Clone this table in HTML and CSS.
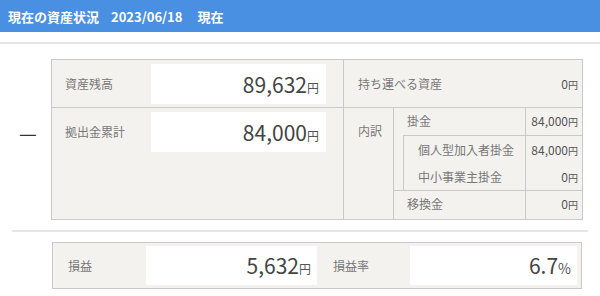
FILE: index.html
```html
<!DOCTYPE html>
<html lang="ja">
<head>
  <meta charset="UTF-8" />
  <meta name="viewport" content="width=device-width, initial-scale=1.0">
  <title>現在の資産状況</title>
  <link rel="stylesheet" href="styles.css">
</head>
<body>
  <header class="status-bar">
    <span class="status-title">現在の資産状況</span>
    <span class="status-date">2023/06/18</span>
    <span class="status-suffix">現在</span>
  </header>
  <div class="rule top-rule"></div>

  <section class="summary">
    <div class="minus">—</div>
    <div class="panel">
      <div class="panel-left">
        <div class="main-row first">
          <span class="label">資産残高</span>
          <div class="value-box"><span class="num">89,632</span><span class="unit">円</span></div>
        </div>
        <div class="main-row">
          <span class="label">拠出金累計</span>
          <div class="value-box"><span class="num">84,000</span><span class="unit">円</span></div>
        </div>
      </div>

      <div class="panel-right">
        <div class="portable">
          <span class="label">持ち運べる資産</span>
          <span class="small-val">0<span class="small-unit">円</span></span>
        </div>
        <div class="breakdown">
          <div class="breakdown-head">内訳</div>
          <div class="breakdown-body">
            <div class="b-row">
              <span class="b-name">掛金</span>
              <span class="b-val">84,000<span class="small-unit">円</span></span>
            </div>
            <div class="b-sub">
              <div class="b-row">
                <span class="b-name">個人型加入者掛金</span>
                <span class="b-val">84,000<span class="small-unit">円</span></span>
              </div>
              <div class="b-row">
                <span class="b-name">中小事業主掛金</span>
                <span class="b-val">0<span class="small-unit">円</span></span>
              </div>
            </div>
            <div class="b-row last">
              <span class="b-name">移換金</span>
              <span class="b-val">0<span class="small-unit">円</span></span>
            </div>
          </div>
        </div>
      </div>
    </div>
  </section>

  <div class="rule mid-rule"></div>

  <section class="profit">
    <div class="profit-panel">
      <span class="label profit-label">損益</span>
      <div class="value-box profit-box"><span class="num">5,632</span><span class="unit">円</span></div>
      <span class="label rate-label">損益率</span>
      <div class="value-box rate-box"><span class="num">6.7</span><span class="unit pct">%</span></div>
    </div>
  </section>
</body>
</html>
```

FILE: styles.css
```css
body {
  margin: 0;
  font-family: "Noto Sans CJK JP", "Noto Sans", sans-serif;
  color: #444;
  background: #fff;
}
.status-bar {
  height: 32px;
  background: #4a90e2;
  color: #fff;
  font-size: 13px;
  font-weight: bold;
  display: flex;
  align-items: center;
  padding-left: 8px;
}
.status-date {
  margin-left: 12px;
}
.status-suffix {
  margin-left: 15px;
}
.rule {
  height: 2px;
  background: #e6e6e6;
}
.top-rule {
  margin-top: 10px;
}
.mid-rule {
  margin: 10px 12px 0 12px;
}
.summary {
  display: flex;
  margin-top: 15px;
}
.minus {
  width: 51px;
  box-sizing: border-box;
  padding: 62px 0 0 19px;
  font-size: 20px;
  line-height: 24px;
  color: #333;
}
.panel {
  width: 532px;
  height: 161px;
  box-sizing: border-box;
  border: 1px solid #c9c9c9;
  background: #f3f2ef;
  display: flex;
}
.label {
  font-size: 12px;
  color: #777;
}
.panel-left {
  width: 291px;
  border-right: 1px solid #c9c9c9;
  display: flex;
  flex-direction: column;
}
.main-row {
  display: flex;
  align-items: flex-start;
  padding: 4px 15px 0 13px;
  flex: 1;
}
.main-row.first {
  flex: none;
  height: 43px;
  border-bottom: 1px solid #c9c9c9;
}
.main-row .label {
  width: 86px;
  line-height: 40px;
}
.value-box {
  background: #fff;
  height: 40px;
  display: flex;
  align-items: baseline;
  justify-content: flex-end;
  padding-right: 7px;
  box-sizing: border-box;
  line-height: 40px;
}
.main-row .value-box {
  width: 175px;
}
.num {
  font-size: 21px;
  color: #444;
}
.unit {
  font-size: 12px;
  color: #555;
}
.panel-right {
  flex: 1;
  display: flex;
  flex-direction: column;
}
.portable {
  height: 47px;
  border-bottom: 1px solid #c9c9c9;
  display: flex;
  align-items: center;
  justify-content: space-between;
  padding: 0 4px 0 14px;
}
.small-val {
  font-size: 12px;
  color: #555;
}
.small-unit {
  font-size: 10px;
}
.breakdown {
  flex: 1;
  display: flex;
}
.breakdown-head {
  width: 50px;
  border-right: 1px solid #c9c9c9;
  box-sizing: border-box;
  padding: 14px 0 0 14px;
  font-size: 12px;
  color: #777;
}
.breakdown-body {
  flex: 1;
  display: flex;
  flex-direction: column;
}
.b-row {
  height: 27px;
  display: flex;
  font-size: 12px;
}
.b-name {
  flex: 1;
  padding-left: 13px;
  line-height: 25px;
  color: #777;
}
.b-val {
  width: 52px;
  border-left: 1px solid #c9c9c9;
  text-align: right;
  padding-right: 4px;
  line-height: 25px;
  color: #555;
}
.b-sub {
  margin-left: 9px;
  border-left: 1px solid #c9c9c9;
  border-top: 1px solid #c9c9c9;
  border-bottom: 1px solid #c9c9c9;
  display: flex;
  flex-direction: column;
  height: 56px;
  box-sizing: border-box;
}
.b-sub .b-row {
  flex: 1;
}
.b-sub .b-name {
  padding-left: 14px;
  line-height: 27px;
}
.b-sub .b-val {
  line-height: 27px;
}
.b-row.last {
  flex: 1;
  margin-top: -1px;
  border-top: 1px solid #c9c9c9;
}
.profit {
  display: flex;
  padding: 10px 0 0 52px;
}
.profit-panel {
  width: 530px;
  height: 47px;
  box-sizing: border-box;
  border: 1px solid #c9c9c9;
  background: #f3f2ef;
  display: flex;
  align-items: center;
  padding: 0 4px 0 15px;
}
.profit-label {
  width: 78px;
}
.profit-box {
  width: 171px;
  height: 39px;
  line-height: 39px;
  padding-right: 6px;
}
.rate-label {
  width: 77px;
  margin-left: 16px;
}
.rate-box {
  width: 167px;
  height: 39px;
  line-height: 39px;
  padding-right: 6px;
}
.pct {
  font-size: 14px;
}
```
